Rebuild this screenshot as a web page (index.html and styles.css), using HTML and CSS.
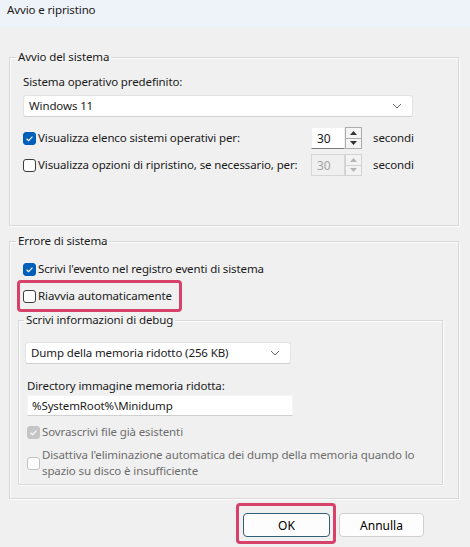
FILE: index.html
```html
<!DOCTYPE html>
<html lang="it">
<head>
<meta charset="utf-8">
<title>Avvio e ripristino</title>
<link rel="stylesheet" href="styles.css">
</head>
<body>
<div class="window">
  <div class="titlebar">Avvio e ripristino</div>
  <div class="content">
    <fieldset class="group group-boot">
      <legend>Avvio del sistema</legend>
      <div class="label label-os">Sistema operativo predefinito:</div>
      <div class="select select-os">
        <span>Windows 11</span>
        <svg class="chev" width="10" height="6" viewBox="0 0 10 6"><path d="M1 1 L5 5 L9 1" fill="none" stroke="#6a6a6a" stroke-width="1"/></svg>
      </div>
      <div class="spin-row spin-row-1">
        <span class="cb checked"><svg viewBox="0 0 13 13"><path d="M3 6.8 L5.4 9 L10 4.2" fill="none" stroke="#fff" stroke-width="1.3"/></svg></span>
        <span class="cb-text">Visualizza elenco sistemi operativi per:</span>
        <span class="spin">
          <span class="spin-input">30</span>
          <span class="spin-btns">
            <span class="spin-btn"><svg viewBox="0 0 7 4"><path d="M0 4 L3.5 0 L7 4Z" fill="#333"/></svg></span>
            <span class="spin-btn"><svg viewBox="0 0 7 4"><path d="M0 0 L3.5 4 L7 0Z" fill="#333"/></svg></span>
          </span>
        </span>
        <span class="unit">secondi</span>
      </div>
      <div class="spin-row spin-row-2">
        <span class="cb"></span>
        <span class="cb-text">Visualizza opzioni di ripristino, se necessario, per:</span>
        <span class="spin disabled">
          <span class="spin-input">30</span>
          <span class="spin-btns">
            <span class="spin-btn"><svg viewBox="0 0 7 4"><path d="M0 4 L3.5 0 L7 4Z" fill="#b5b5b5"/></svg></span>
            <span class="spin-btn"><svg viewBox="0 0 7 4"><path d="M0 0 L3.5 4 L7 0Z" fill="#b5b5b5"/></svg></span>
          </span>
        </span>
        <span class="unit">secondi</span>
      </div>
    </fieldset>

    <fieldset class="group group-error">
      <legend>Errore di sistema</legend>
      <div class="cb-row row-event">
        <span class="cb checked"><svg viewBox="0 0 13 13"><path d="M3 6.8 L5.4 9 L10 4.2" fill="none" stroke="#fff" stroke-width="1.3"/></svg></span>
        <span class="cb-text">Scrivi l'evento nel registro eventi di sistema</span>
      </div>
      <div class="highlight hl-restart">
        <div class="cb-row">
          <span class="cb"></span>
          <span class="cb-text">Riavvia automaticamente</span>
        </div>
      </div>
      <fieldset class="group inner">
        <legend>Scrivi informazioni di debug</legend>
        <div class="select select-dump">
          <span>Dump della memoria ridotto (256 KB)</span>
          <svg class="chev" width="10" height="6" viewBox="0 0 10 6"><path d="M1 1 L5 5 L9 1" fill="none" stroke="#6a6a6a" stroke-width="1"/></svg>
        </div>
        <div class="label label-dir">Directory immagine memoria ridotta:</div>
        <div class="textbox">%SystemRoot%\Minidump</div>
        <div class="cb-row disabled row-overwrite">
          <span class="cb checked dis"><svg viewBox="0 0 13 13"><path d="M3 6.8 L5.4 9 L10 4.2" fill="none" stroke="#fff" stroke-width="1.3"/></svg></span>
          <span class="cb-text">Sovrascrivi file già esistenti</span>
        </div>
        <div class="cb-row disabled multi">
          <span class="cb dis"></span>
          <span class="cb-text">Disattiva l'eliminazione automatica dei dump della memoria quando lo spazio su disco è insufficiente</span>
        </div>
      </fieldset>
    </fieldset>

    <div class="buttons">
      <span class="highlight hl-ok"><button class="btn btn-ok" type="button">OK</button></span>
      <button class="btn btn-cancel" type="button">Annulla</button>
    </div>
  </div>
</div>
</body>
</html>
```

FILE: styles.css
```css
* { box-sizing: border-box; }

html, body {
  margin: 0;
  padding: 0;
  background: #f0f0f0;
}

body {
  font-family: "Noto Sans", "Open Sans", sans-serif;
  font-size: 11.5px;
  letter-spacing: -0.12px;
  line-height: 16px;
  color: #1a1a1a;
}

.window {
  width: 470px;
  height: 547px;
  overflow: hidden;
}

.titlebar {
  height: 27px;
  padding: 2px 0 0 7px;
  background: #eef2f9;
  line-height: 16px;
}

.content {
  padding: 22px 11px 0 9px;
}

.group {
  margin: 0;
  padding: 0 0 0 13px;
  border: 1px solid #d9d9d9;
  border-radius: 0;
  box-shadow: inset 1px 1px 0 #fbfbfb, 1px 1px 0 #fbfbfb;
  min-width: 0;
}

.group legend {
  padding: 0 2px;
  line-height: 16px;
  margin-left: -7px;
  white-space: nowrap;
}

.group-boot {
  height: 177px;
}

.label-os {
  margin-top: 9px;
}

.select {
  display: flex;
  align-items: center;
  justify-content: space-between;
  height: 22px;
  padding: 0 10px 0 5px;
  background: #fff;
  border: 1px solid #e3e3e3;
  border-bottom-color: #cfcfcf;
  border-radius: 3px;
}

.select-os {
  width: 390px;
  margin-top: 5px;
}

.chev { display: block; }

.spin-row {
  display: flex;
  align-items: center;
  height: 22px;
  white-space: nowrap;
}

.spin-row-1 { margin-top: 10px; }
.spin-row-2 { margin-top: 5px; }

.cb {
  flex: none;
  width: 13px;
  height: 13px;
  border: 1px solid #3c3c3c;
  border-radius: 3px;
  background: #fff;
  display: inline-block;
}

.cb svg { display: block; width: 11px; height: 11px; }

.cb.checked {
  background: #005fb8;
  border-color: #005fb8;
}

.cb.dis {
  border-color: #c2c2c2;
  background: #fcfcfc;
}

.cb.checked.dis {
  background: #c5c5c5;
  border-color: #c5c5c5;
}

.cb-text {
  margin-left: 2px;
}

.spin-row .cb-text {
  width: 273px;
}

.spin {
  display: flex;
  height: 22px;
}

.spin-input {
  width: 34px;
  height: 22px;
  padding: 3px 0 0 5px;
  background: #fff;
  border: 1px solid #f0f0f0;
  border-bottom-color: #7a7a7a;
  font-size: 12px;
}

.spin-btns {
  display: flex;
  flex-direction: column;
  width: 17px;
  height: 22px;
}

.spin-btn {
  flex: 1;
  display: flex;
  align-items: center;
  justify-content: center;
  background: #f4f4f4;
  border: 1px solid #acacac;
}

.spin-btn + .spin-btn { border-top: none; }

.spin-btn svg { width: 7px; height: 4px; display: block; }

.spin.disabled .spin-input {
  background: #f0f0f0;
  border-color: #d6d6d6;
  color: #a3a3a3;
}

.spin.disabled .spin-btn {
  border-color: #d3d3d3;
  background: #f3f3f3;
}

.unit {
  margin-left: 11px;
}

.group-error {
  margin-top: 7px;
  height: 266px;
}

.cb-row {
  display: flex;
  align-items: center;
  min-height: 16px;
  white-space: nowrap;
}

.row-event {
  margin-top: 12px;
}

.highlight {
  border: 3px solid #d6426a;
  border-radius: 4px;
}

.hl-restart {
  width: 165px;
  height: 32px;
  margin: 3px 0 0 -6px;
  padding: 0 0 0 3px;
  display: flex;
  align-items: center;
}

.inner {
  width: 425px;
  margin: 0 0 0 -5px;
  padding: 0 0 0 8px;
  height: 173px;
}

.inner legend {
  margin-left: -3px;
}

.select-dump {
  width: 266px;
  margin: 14px 0 0 -2px;
}

.label-dir {
  margin-top: 14px;
}

.textbox {
  width: 266px;
  height: 21px;
  margin-top: 1px;
  padding: 2px 0 0 4px;
  background: #fff;
  border: 1px solid #f4f4f4;
  border-bottom-color: #d0d0d0;
}

.cb-row.disabled .cb-text {
  color: #6d6d6d;
}

.row-overwrite {
  margin-top: 8px;
}

.multi {
  margin-top: 7px;
  white-space: normal;
}

.multi .cb-text {
  width: 395px;
}

.buttons {
  display: flex;
  justify-content: flex-end;
  align-items: flex-start;
  padding-right: 35px;
  margin-top: 4px;
}

.hl-ok {
  display: inline-block;
  padding: 7px 3px 4px 4px;
  margin-right: 3px;
}

.btn {
  font-family: inherit;
  font-size: 12px;
  height: 24px;
  padding: 0;
  background: #fdfdfd;
  border: 1px solid #d0d0d0;
  border-radius: 4px;
  color: #000;
  display: block;
}

.btn-ok {
  width: 87px;
  border-color: #2f6078;
}

.btn-cancel {
  width: 85px;
  margin-top: 10px;
}
```
